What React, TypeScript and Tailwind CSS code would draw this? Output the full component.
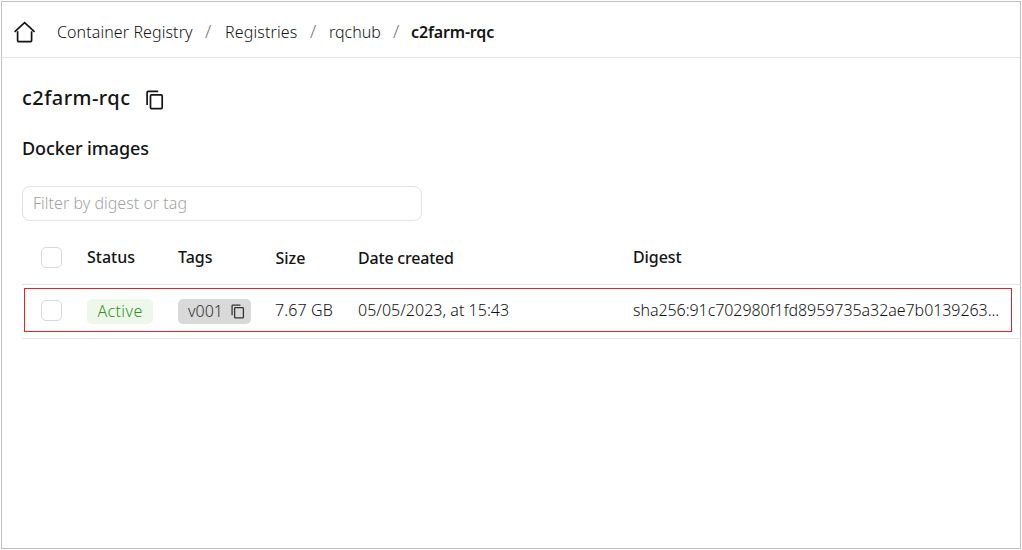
import React from "react";

function CopyIcon({ className }: { className: string }) {
  return (
    <svg className={className} viewBox="0 0 18 20" fill="none" stroke="currentColor" strokeWidth="1.7">
      <path d="M1.1 15V2.4c0-.6.4-1 1-1H12.2" />
      <rect x="4.5" y="4.9" width="11.7" height="13.7" rx="1" />
    </svg>
  );
}

function HomeIcon() {
  return (
    <svg className="h-[22px] w-[22px] shrink-0" viewBox="0 0 22 22" fill="none" stroke="currentColor" strokeWidth="1.7">
      <path d="M0.6 10.9 10.6 1.6l10 9.3" />
      <path d="M3.6 10.3v9.3c0 .6.4 1 1 1h12c.6 0 1-.4 1-1v-9.3" />
    </svg>
  );
}

function Slash() {
  return <span className="-mt-[2px] w-[8px] text-[18px] font-light text-[#737373]">/</span>;
}

function Checkbox() {
  return <span className="block h-[21px] w-[21px] rounded-[5px] border border-[#d9d9d9] bg-white" />;
}

export default function App() {
  return (
    <div className="h-[550px] w-[1022px] bg-white pl-px pt-px font-['Noto_Sans',sans-serif] text-[16px] font-[350] leading-[22px] text-[#141414]">
      <div className="h-[548px] w-[1020px] border border-[#c0c0c0]">
        <nav className="-ml-[2px] flex h-[56px] items-center border-b border-[#e3e3e3] pl-[14px] pt-[5px]">
          <HomeIcon />
          <span className="ml-[21px] w-[136px] whitespace-nowrap tracking-[0.09px]">Container Registry</span>
          <span className="ml-[12px] flex"><Slash /></span>
          <span className="ml-[12px] w-[73px] tracking-[0.14px]">Registries</span>
          <span className="ml-[12px] flex"><Slash /></span>
          <span className="ml-[11px] w-[52px]">rqchub</span>
          <span className="ml-[12px] flex"><Slash /></span>
          <span className="ml-[10px] whitespace-nowrap font-semibold tracking-[-0.15px]">c2farm-rqc</span>
        </nav>
        <main className="pl-5">
          <div className="mt-[26px] flex h-[28px] items-center">
            <h1 className="w-[124px] whitespace-nowrap text-[20px] font-medium leading-[28px] tracking-[0.45px]">c2farm-rqc</h1>
            <CopyIcon className="mt-[4px] h-[20px] w-[18px]" />
          </div>
          <h2 className="mt-[24px] text-[18px] font-medium leading-[24px] tracking-[-0.1px]">Docker images</h2>
          <input
            className="mt-[26px] block h-[35px] w-[400px] rounded-[8px] border border-[#e3e3e3] px-[10px] pb-[2px] tracking-[0.02px] outline-none placeholder:text-[#a3a3a3]"
            placeholder="Filter by digest or tag"
          />
          <div className="mt-[10px] w-[999px]">
            <div className="grid h-[54px] grid-cols-[46px_91px_97px_83px_275px_1fr] items-center border-b border-[#e3e3e3] pl-[19px] font-medium">
              <Checkbox />
              <span className="-mt-px">Status</span>
              <span className="-mt-px">Tags</span>
              <span className="pl-[0.5px]">Size</span>
              <span className="tracking-[-0.2px]">Date created</span>
              <span className="-mt-px tracking-[-0.1px]">Digest</span>
            </div>
            <div className="h-[54px] border-b border-[#e3e3e3] pl-[2px] pt-[3px]">
              <div className="grid h-[44px] w-[988px] grid-cols-[46px_91px_97px_83px_275px_1fr] items-center border border-[#e8202a] pl-[16px]">
                <Checkbox />
                <span className="mt-[2px] flex h-[25px] w-[66px] items-center justify-center rounded-[5px] bg-[#edf8eb] pb-px tracking-[0.4px] text-[#35911f]">Active</span>
                <span className="mt-[2px] flex h-[25px] w-[73px] items-center rounded-[5px] bg-[#d9d9d9] pb-px pl-[10px] text-[#333333]">
                  <span className="w-[43px]">v001</span>
                  <CopyIcon className="mt-px h-[15px] w-[14px]" />
                </span>
                <span className="whitespace-nowrap tracking-[0.1px]">7.67 GB</span>
                <span className="whitespace-nowrap tracking-[0.03px]">05/05/2023, at 15:43</span>
                <span className="whitespace-nowrap tracking-[-0.06px]">sha256:91c702980f1fd8959735a32ae7b0139263...</span>
              </div>
            </div>
          </div>
        </main>
      </div>
    </div>
  );
}
